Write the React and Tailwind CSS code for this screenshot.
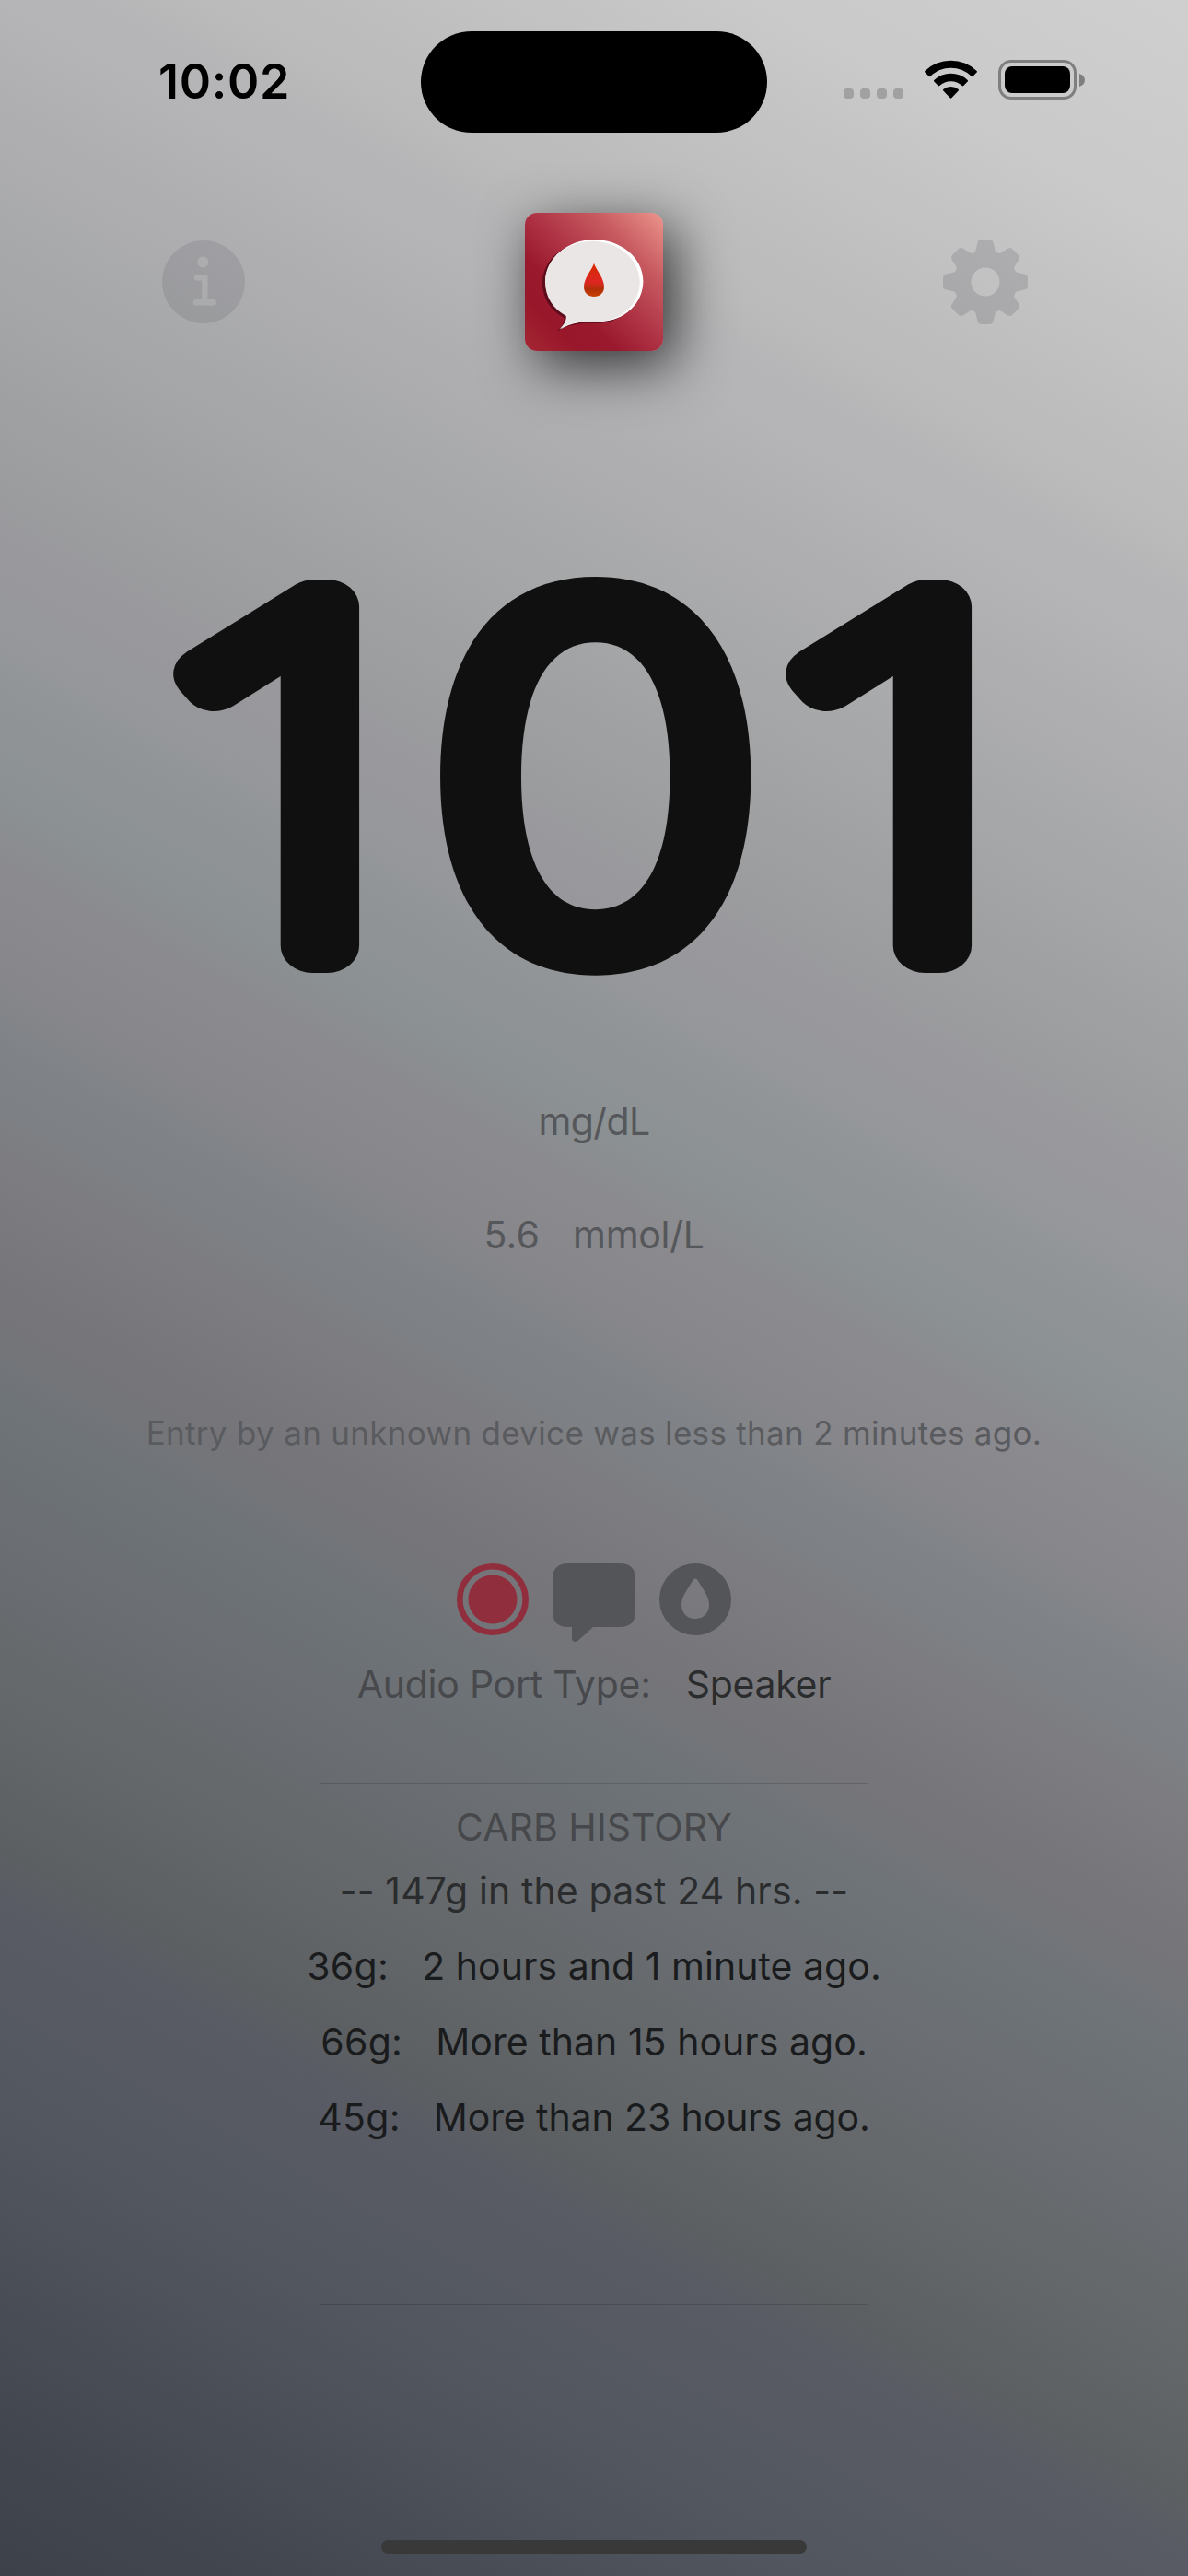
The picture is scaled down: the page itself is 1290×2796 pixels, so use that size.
import React from "react";

const history = [
  { grams: "36g:", when: "2 hours and 1 minute ago.", whenTracking: "tracking-[0.04px]" },
  { grams: "66g:", when: "More than 15 hours ago.", whenTracking: "tracking-[0.04px]" },
  { grams: "45g:", when: "More than 23 hours ago.", whenTracking: "tracking-[-0.1px]" },
];

function StatusBar() {
  return (
    <header className="grid h-[178px] grid-cols-[457px_376px_457px] pt-[34px]">
      <div className="pl-[172px] pt-[25px] text-[52px] font-semibold leading-[60px] tracking-[0.7px] text-black">10:02</div>
      <div className="h-[110px] rounded-full bg-black" />
      <div className="flex items-start pl-[83px] pt-[31px]">
        <div className="mt-[31px] flex gap-[7px]">
          {[0, 1, 2, 3].map((i) => (
            <span key={i} className="size-[11px] rounded-[4px] bg-[#a1a1a1]" />
          ))}
        </div>
        <svg className="ml-[23px] h-[43px] w-[57px]" viewBox="0 0 57 43">
          <path d="M0.4 13.6 Q-0.4 12.8 0.4 12 A40.5 40.5 0 0 1 56.600 12 Q57.400 12.800 56.600 13.600 L52.400 17.800 Q51.600 18.600 50.800 17.800 A32 32 0 0 0 6.200 17.800 Q5.400 18.600 4.600 17.800 Z" />
          <path d="M10.300 23.600 Q9.500 22.800 10.300 22 A26.300 26.300 0 0 1 46.700 22 Q47.500 22.800 46.700 23.600 L42.300 28 Q41.500 28.800 40.700 28 A18 18 0 0 0 16.300 28 Q15.500 28.800 14.700 28 Z" />
          <path d="M20.300 33.600 Q19.500 32.800 20.300 32 A12.500 12.500 0 0 1 36.700 32 Q37.500 32.800 36.700 33.600 L29.300 41.300 Q28.500 42.100 27.700 41.300 Z" />
        </svg>
        <div className="ml-[23px] h-[43px] w-[85px] rounded-[14px] border-[3px] border-[#7f7f7f] p-[4px]">
          <div className="h-full w-full rounded-[8px] bg-black" />
        </div>
        <svg className="ml-[3px] mt-[15px] h-[14px] w-[6px]" viewBox="0 0 6 14">
          <path d="M0 0 Q6 2 6 7 Q6 12 0 14 Z" fill="#7f7f7f" />
        </svg>
      </div>
    </header>
  );
}

function InfoIcon() {
  return (
    <svg className="size-[90px]" viewBox="0 0 90 90">
      <mask id="info-mask">
        <circle cx="45" cy="45" r="45" fill="#fff" />
        <circle cx="44.300" cy="23.600" r="6" fill="#000" />
        <path d="M38 40.200 H46.300 V67.300 M37 67.300 H55.700" fill="none" stroke="#000" strokeWidth="6.400" strokeLinecap="round" strokeLinejoin="round" />
      </mask>
      <rect width="90" height="90" fill="#10101c" opacity="0.09" mask="url(#info-mask)" />
    </svg>
  );
}

function GearIcon() {
  return (
    <svg className="size-[92px]" viewBox="-46 -46 92 92">
      <mask id="gear-mask" x="-46" y="-46" width="92" height="92" maskUnits="userSpaceOnUse">
        <circle r="34.500" fill="#fff" />
        {[0, 45, 90, 135, 180, 225, 270, 315].map((a) => (
          <path
            key={a}
            transform={`rotate(${a})`}
            fill="#fff"
            d="M-15.500 -30.500 Q-11.200 -31.500 -10.600 -34 L-8.600 -42.600 Q-7.800 -46 -4.600 -46 H4.600 Q7.800 -46 8.600 -42.600 L10.600 -34 Q11.200 -31.500 15.500 -30.500 L8 -20 H-8 Z"
          />
        ))}
        <circle r="15.500" fill="#000" />
      </mask>
      <rect x="-46" y="-46" width="92" height="92" fill="#1c1c30" opacity="0.135" mask="url(#gear-mask)" />
    </svg>
  );
}

function AppLogo() {
  const bubble =
    "M75 29 C104 29 128 49 128 74 C128 99 107 117 83 118 C68 117.500 52 118 38 126.500 C43 122 46 117 45.500 112 C31 104 22 91 22 74 C22 49 46 29 75 29 Z";
  return (
    <div className="size-[150px] rounded-[13px] shadow-[12px_16px_60px_rgba(0,0,0,0.72)]">
      <svg className="size-[150px] rounded-[13px]" viewBox="0 0 150 150">
        <defs>
          <linearGradient id="logo-bg" x1="0" y1="1" x2="1" y2="0">
            <stop offset="0" stopColor="#a42633" />
            <stop offset="0.200" stopColor="#98172a" />
            <stop offset="0.340" stopColor="#9a192d" />
            <stop offset="0.500" stopColor="#ac3042" />
            <stop offset="0.750" stopColor="#c75a60" />
            <stop offset="1" stopColor="#ec958c" />
          </linearGradient>
          <linearGradient id="logo-drop" x1="0" y1="0" x2="0" y2="1">
            <stop offset="0" stopColor="#d62a00" />
            <stop offset="0.550" stopColor="#dd2622" />
            <stop offset="0.780" stopColor="#b03008" />
            <stop offset="1" stopColor="#c94002" />
          </linearGradient>
        </defs>
        <rect width="150" height="150" fill="url(#logo-bg)" />
        <path d={bubble} fill="#5c0c1b" transform="translate(-3 2)" />
        <path d={bubble} fill="#ffffff" transform="translate(0.400 0)" />
        <path d={bubble} fill="#ebe6e6" transform="translate(0.600 2.200) scale(0.970 0.981)" />
        <path d="M75 55 C78 63 86 71 86 80.500 C86 87 81 91 75 91 C69 91 64 87 64 80.500 C64 71 72 63 75 55 Z" fill="url(#logo-drop)" />
      </svg>
    </div>
  );
}

function Reading() {
  return (
    <svg className="h-[560px] w-[1290px]" viewBox="0 560 1290 560" fill="#0f100f" stroke="#0f100f">
      <text transform="translate(161 1026.500) scale(1.178 1)" fontFamily="Noto Sans, sans-serif" fontSize="515.400" fontWeight="100" strokeWidth="59" strokeLinejoin="round">1</text>
      <text transform="translate(451.500 1053)" fontFamily="Inter, sans-serif" fontSize="579" fontWeight="700" stroke="none">0</text>
      <text transform="translate(826 1026.500) scale(1.178 1)" fontFamily="Noto Sans, sans-serif" fontSize="515.400" fontWeight="100" strokeWidth="59" strokeLinejoin="round">1</text>
    </svg>
  );
}

function StateIcons() {
  return (
    <div className="flex h-[86px] justify-center gap-[26px]">
      <svg className="size-[78px]" viewBox="0 0 78 78">
        <circle cx="39" cy="39" r="35.700" fill="none" stroke="#902e3e" strokeWidth="6.600" />
        <circle cx="39" cy="39" r="26.500" fill="#902e3e" />
      </svg>
      <svg className="h-[86px] w-[90px]" viewBox="0 0 90 86" fill="#545559">
        <path d="M17 0 H73 Q90 0 90 17 V52 Q90 69 73 69 H44 L28 83.500 Q25.500 85.500 23 84.700 Q21 84 21 81 V69 H17 Q0 69 0 52 V17 Q0 0 17 0 Z" />
      </svg>
      <svg className="size-[78px]" viewBox="0 0 78 78" fill="#545559">
        <path
          fillRule="evenodd"
          d="M39 0 A39 39 0 0 1 39 78 A39 39 0 0 1 39 0 Z M39 16.500 Q37.300 16.500 36.400 18.200 C32 26.500 24 35 24 45 C24 54 30.500 60 39 60 C47.500 60 54 54 54 45 C54 35 46 26.500 41.600 18.200 Q40.700 16.500 39 16.500 Z"
        />
      </svg>
    </div>
  );
}

export default function App() {
  return (
    <main className="flex h-[2796px] w-[1290px] flex-col overflow-hidden whitespace-nowrap bg-[linear-gradient(208.8deg,#cfcfcf_0%,#cacaca_7%,#c0c0c0_13%,#bababa_17%,#b6b6b8_18.5%,#b4b4b7_20.5%,#aeaeb1_24%,#a7a8a9_28%,#a3a4a5_30.5%,#9d9ea0_34%,#98989c_38%,#95979a_40%,#909496_42%,#8b9092_45%,#8b8b8f_47%,#87878b_50.5%,#7f8387_52.5%,#7d8084_54.5%,#7d7d81_56%,#757579_61%,#6f7478_63.5%,#696d71_69%,#616567_74.4%,#5c5f62_77.5%,#5a5c65_79%,#51565f_86%,#434750_95%,#3d4149_100%)] font-[Inter,sans-serif] text-[41px] leading-[50px]">
      <StatusBar />

      <div className="mt-[53px] flex h-[150px] items-center justify-between pl-[176px] pr-[174px]">
        <InfoIcon />
        <AppLogo />
        <GearIcon />
      </div>

      <div className="mt-[179px]">
        <Reading />
      </div>

      <div className="mt-[72px] text-center tracking-[-0.6px] text-[#56575a]">mg/dL</div>
      <div className="mt-[73px] flex justify-center gap-[36px] text-[#56575a]">
        <span className="tracking-[0.2px]">5.6</span>
        <span className="tracking-[-0.3px]">mmol/L</span>
      </div>

      <div className="mt-[168px] text-center text-[35px] leading-[44px] tracking-[0.31px] text-[#5a5b5f]">
        Entry by an unknown device was less than 2 minutes ago.
      </div>

      <div className="mt-[120px]">
        <StateIcons />
      </div>

      <div className="mt-[20px] flex justify-center gap-[38px]">
        <span className="tracking-[-0.25px] text-[#48494c]">Audio Port Type:</span>
        <span className="tracking-[-0.3px] text-[#2b2c2e]">Speaker</span>
      </div>

      <div className="mx-auto mt-[82px] h-px w-[594px] bg-black/15" />
      <div className="mt-[22px] text-center text-[#47484b]">CARB HISTORY</div>
      <div className="mt-[19px] text-center tracking-[0.12px] text-[#2b2c2e]">-- 147g in the past 24 hrs. --</div>

      <div className="mt-[32px] flex flex-col gap-[32px] text-[#1a1b1d]">
        {history.map((h) => (
          <div key={h.grams} className="flex justify-center gap-[36px]">
            <span className="tracking-[0.3px]">{h.grams}</span>
            <span className={h.whenTracking}>{h.when}</span>
          </div>
        ))}
      </div>

      <div className="mx-auto mt-[178px] h-px w-[594px] bg-black/15" />
      <div className="mx-auto mt-[255px] h-[15px] w-[462px] rounded-full bg-[#39393a]" />
    </main>
  );
}
